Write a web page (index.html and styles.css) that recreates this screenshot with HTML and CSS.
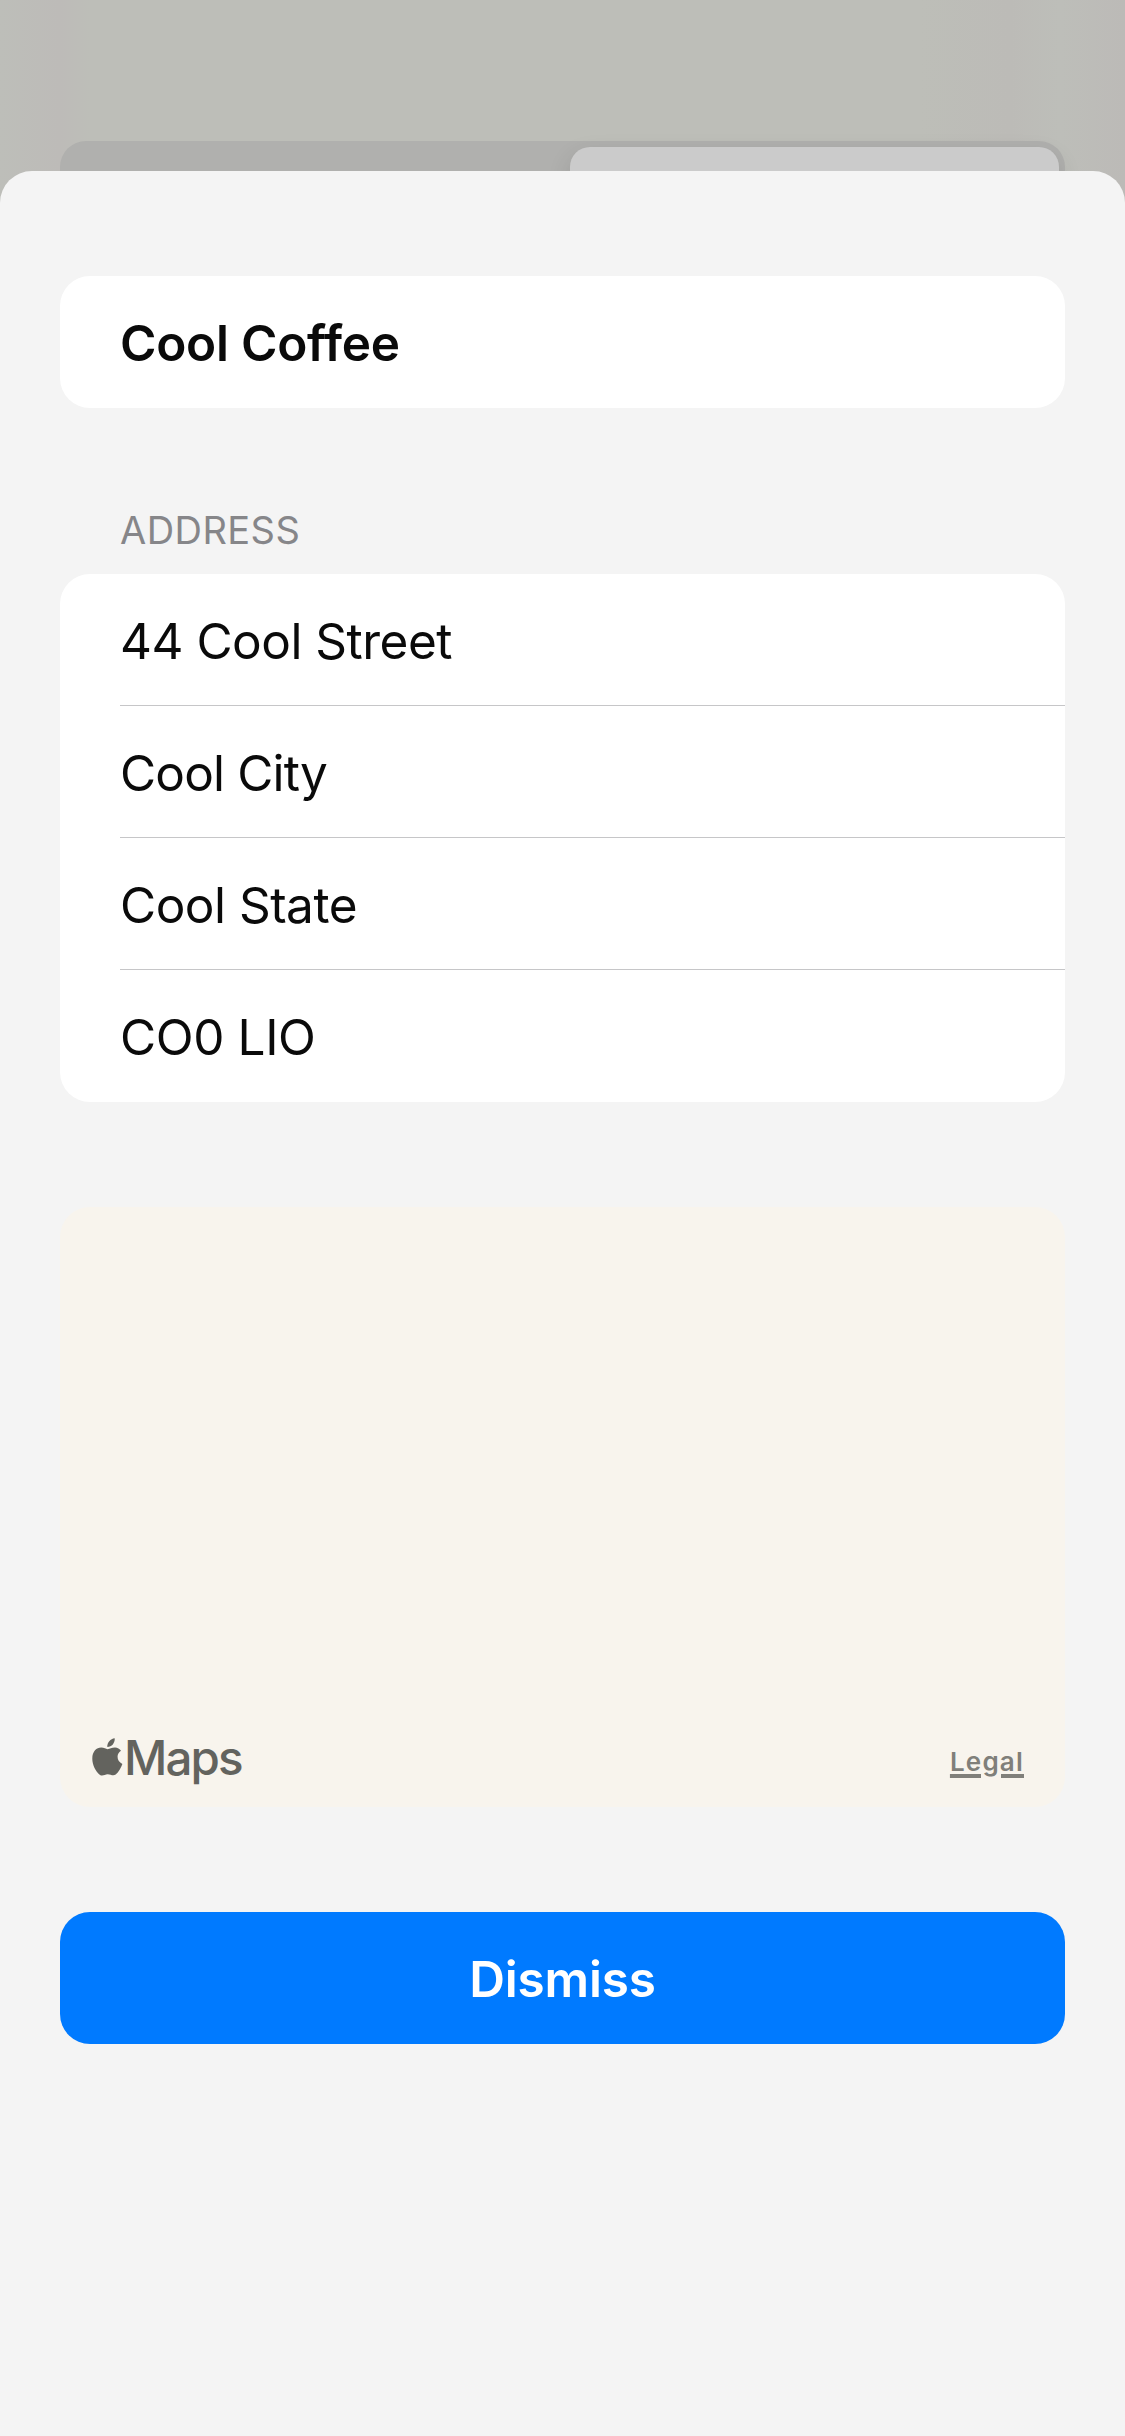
FILE: index.html
```html
<!DOCTYPE html>
<html lang="en">
<head>
<meta charset="utf-8">
<title>Cool Coffee</title>
<link rel="stylesheet" href="styles.css">
</head>
<body>
<div class="screen">
  <div class="backdrop">
    <div class="segmented"><div class="segment"></div><div class="segment selected"></div></div>
  </div>
  <main class="sheet">
    <section class="card"><h1 class="row title">Cool Coffee</h1></section>
    <h2 class="label"><span>ADDRESS</span></h2>
    <section class="card address">
      <div class="row"><span class="street">44 Cool Street</span></div>
      <div class="row"><span class="city">Cool City</span></div>
      <div class="row"><span class="state">Cool State</span></div>
      <div class="row"><span class="zip">CO0 LIO</span></div>
    </section>
    <section class="map">
      <div class="brand">
        <svg class="apple" viewBox="0 0 31 38" aria-hidden="true">
          <path d="M15.5 11.2C18 11.2 19.5 9.6 23 9.6C25.5 9.6 27.8 11 29 12.8C23.800 15.800 24.700 23.800 30.400 25.900C29.200 29.300 26.500 34.200 23.700 36.600C20.900 38.400 18.700 36.200 15.700 36.200C12.700 36.200 10.800 38.500 8 36.900C3.400 33.300 0.300 26.600 0.300 20.700C0.300 13.500 4.600 9.600 9.200 9.600C12 9.600 14 11.200 15.500 11.200Z"/>
          <path d="M22.700 0.200C23.100 4.900 19.700 9 15.300 9C14.800 4.700 18.600 0.700 22.700 0.200Z"/>
        </svg>
        <span class="maps">Maps</span>
      </div>
      <a class="legal">Legal</a>
    </section>
    <button class="dismiss"><span>Dismiss</span></button>
  </main>
</div>
</body>
</html>
```
FILE: styles.css
```css
* { box-sizing: border-box; }
body { margin: 0; font-family: Inter, "Liberation Sans", sans-serif; color: #0a0a0a; }
.screen {
  display: flex;
  flex-direction: column;
  height: 2436px;
  overflow: hidden;
  background: linear-gradient(90deg, #bdbeb9 0, #bdbbb8 60px, #bdbeb8 90px, #bdbeb8 920px, #bcbbb7 1010px, #bdbeb9 1060px, #bcbab7 1125px);
}
.backdrop { height: 171px; flex: none; padding: 141px 60px 0; overflow: hidden; }
.segmented {
  display: flex;
  height: 96px;
  padding: 6px;
  border-radius: 26px;
  background: #b0b0ae;
}
.segment { flex: 1; }
.segment.selected {
  flex: 0 0 489px;
  border-radius: 20px;
  background: #cbcbcb;
  box-shadow: 0 9px 24px rgba(0, 0, 0, .12);
}
.sheet {
  flex: 1;
  display: flex;
  flex-direction: column;
  padding: 105px 60px 0;
  border-radius: 32px 32px 0 0;
  background: #f4f4f4;
}
.card { flex: none; border-radius: 30px; background: #fff; overflow: hidden; }
.row {
  display: flex;
  align-items: center;
  height: 132px;
  margin: 0 0 0 60px;
  padding-top: 2px;
  font-size: 49.5px;
  line-height: 60px;
  font-weight: 400;
  white-space: pre;
}
.row + .row { box-shadow: 0 -1px 0 #c6c6c8; }
.title { font-weight: 600; letter-spacing: -.25px; font-variant-ligatures: none; }
.street, .state { letter-spacing: -.5px; }
.city { letter-spacing: -.85px; }
.zip { letter-spacing: -.4px; }
.label {
  display: flex;
  align-items: flex-end;
  height: 166px;
  margin: 0 0 0 60px;
  padding-bottom: 21px;
  font-size: 38px;
  line-height: 46px;
  font-weight: 400;
  letter-spacing: .45px;
  color: #868689;
}
.map {
  flex: none;
  display: flex;
  justify-content: space-between;
  align-items: flex-end;
  height: 600px;
  margin: 105px 0;
  padding: 0 41px 21px 32px;
  border-radius: 30px;
  background: #f8f4ed;
}
.brand { display: flex; align-items: center; color: #63635e; }
.apple { width: 31px; height: 38px; margin-bottom: 2px; fill: currentColor; }
.maps { margin-left: 1px; font-size: 47.5px; line-height: 56px; font-weight: 500; letter-spacing: -1.9px; }
.legal {
  margin-bottom: 8px;
  font-size: 26px;
  line-height: 32px;
  font-weight: 600;
  letter-spacing: 1.2px;
  color: #807f7a;
  text-decoration: underline;
  text-decoration-thickness: 4px;
  text-underline-offset: 3px;
}
.dismiss {
  flex: none;
  height: 132px;
  padding: 2px 0 0;
  border: 0;
  border-radius: 30px;
  background: #007aff;
  color: #fff;
  font: 600 49.5px/60px Inter, "Liberation Sans", sans-serif;
  letter-spacing: -.2px;
}
```
